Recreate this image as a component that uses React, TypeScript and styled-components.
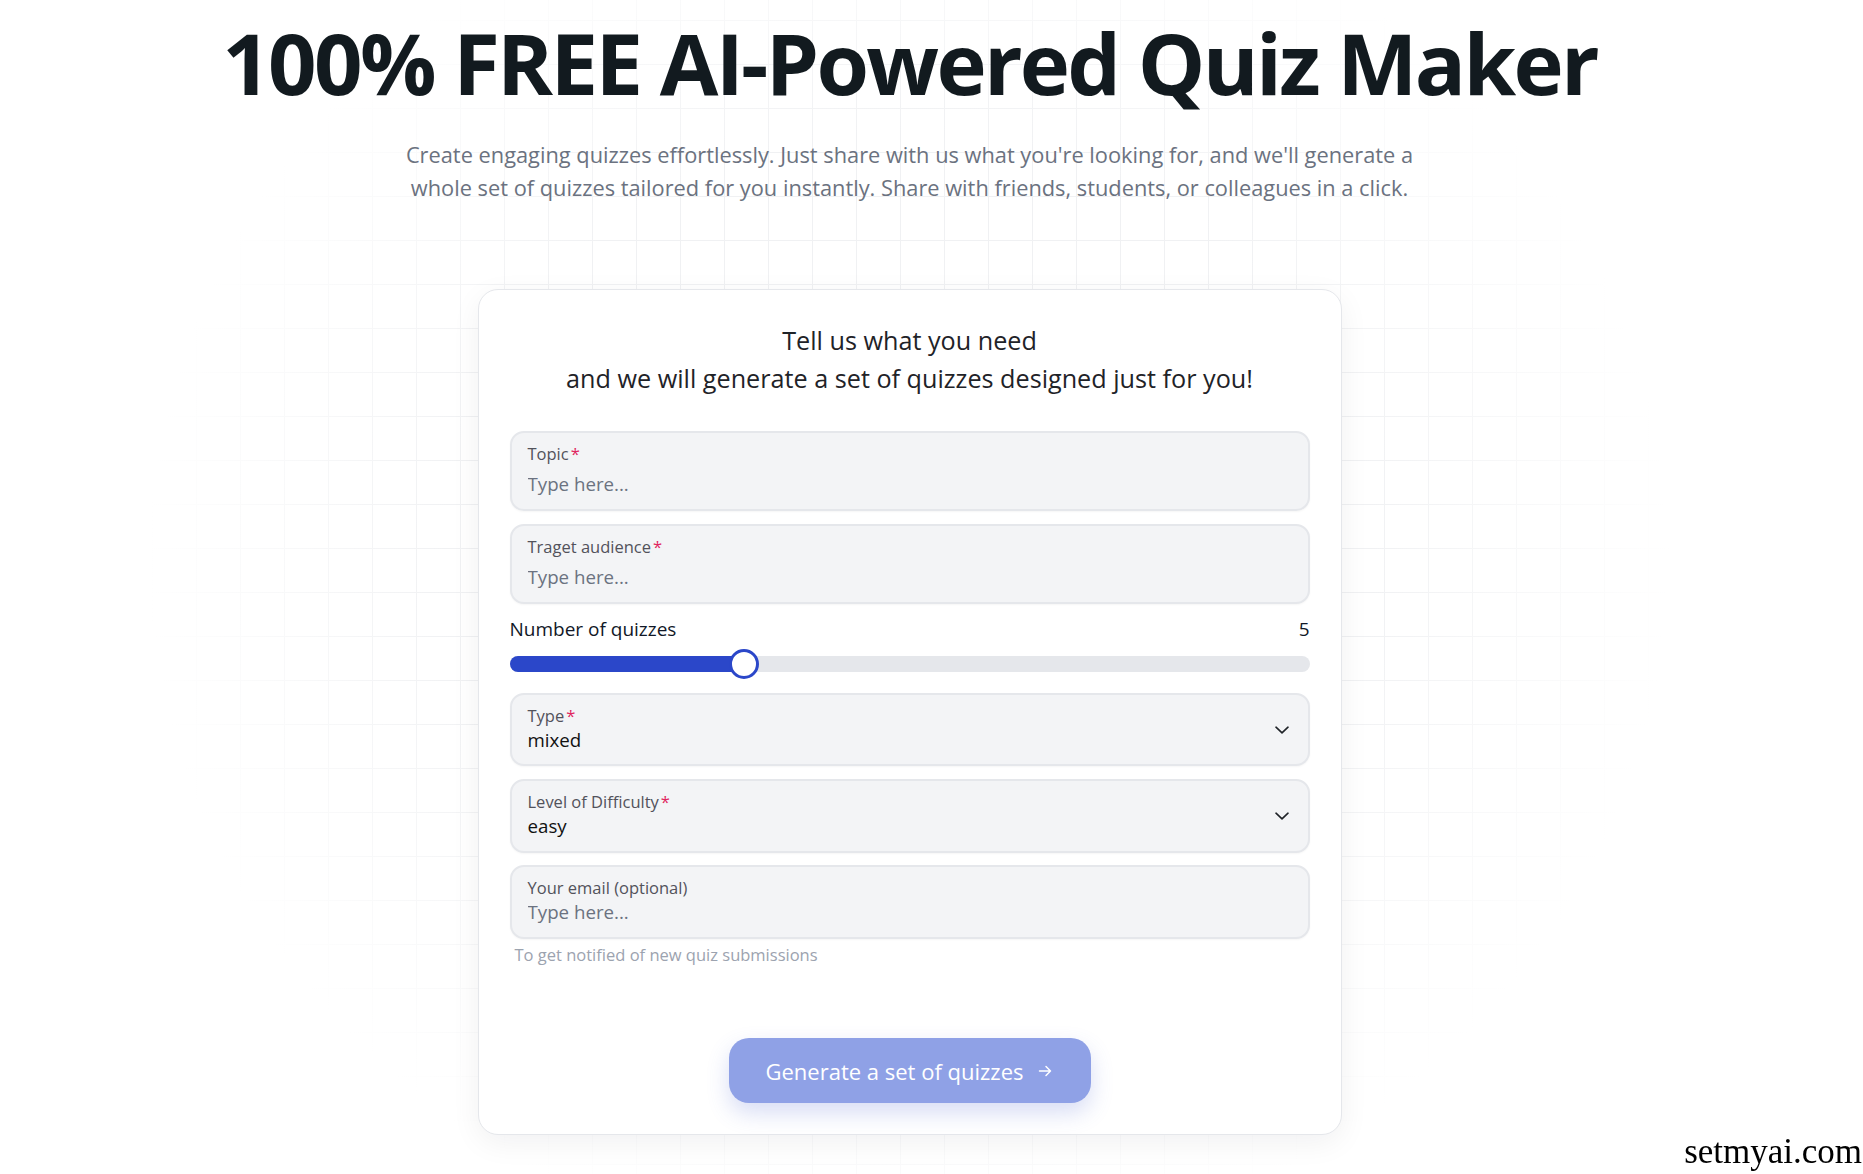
import React from "react";
import styled, { createGlobalStyle } from "styled-components";

const GlobalStyle = createGlobalStyle`
  html, body { margin: 0; padding: 0; background: #ffffff; }
  body { font-family: "Open Sans", "Noto Sans", sans-serif; color: #111827; }
  * { box-sizing: border-box; }
`;

const Page = styled.div`
  min-height: 1174px;
  padding: 12px 44px 0 0;
  display: flex;
  flex-direction: column;
  align-items: center;
  background-color: #ffffff;
  background-image:
    radial-gradient(ellipse 760px 700px at 909px 560px, rgba(255,255,255,0) 60%, #ffffff 100%),
    linear-gradient(to right, #f0f1f3 1px, transparent 1px),
    linear-gradient(to bottom, #f0f1f3 1px, transparent 1px);
  background-size: 100% 100%, 44px 44px, 44px 44px;
  background-position: 0 0, 20px 20px, 20px 20px;
`;

const Title = styled.h1`
  margin: 0;
  font-family: "Open Sans", "Noto Sans", sans-serif;
  font-weight: 700;
  font-size: 85px;
  line-height: 100px;
  letter-spacing: -2.7px;
  color: #121a1f;
  text-align: center;
  white-space: nowrap;
`;

const Subtitle = styled.p`
  margin: 26px 0 0;
  max-width: 1060px;
  font-size: 21.8px;
  line-height: 33px;
  color: #6b7280;
  text-align: center;
`;

const Card = styled.section`
  margin-top: 85px;
  width: 864px;
  background: #ffffff;
  border: 1px solid #e5e7eb;
  border-radius: 20px;
  box-shadow: 0 8px 30px rgba(17, 24, 39, 0.06);
  padding: 31px 31px 31px;
  display: flex;
  flex-direction: column;
`;

const CardHeading = styled.h2`
  margin: 0 0 34px;
  font-weight: 400;
  font-size: 25.2px;
  line-height: 38px;
  color: #1f2328;
  text-align: center;
`;

const Form = styled.div`
  display: flex;
  flex-direction: column;
`;

const Field = styled.label<{ $h: number; $mt?: number }>`
  position: relative;
  display: flex;
  flex-direction: column;
  height: ${(p) => p.$h}px;
  margin-top: ${(p) => p.$mt ?? 0}px;
  padding: 10px 16px 0;
  background: #f3f4f6;
  border: 2px solid #e5e7eb;
  border-radius: 14px;
  box-shadow: 0 1px 2px rgba(0, 0, 0, 0.04);
`;

const FieldLabel = styled.span`
  font-size: 16.5px;
  line-height: 21px;
  color: #52525b;
`;

const Required = styled.span`
  color: #e0245e;
  margin-left: 2px;
`;

const TextInput = styled.input`
  margin-top: 7px;
  border: none;
  outline: none;
  background: transparent;
  padding: 0;
  font-family: inherit;
  font-size: 18.7px;
  line-height: 26px;
  height: 26px;
  color: #111827;
  &::placeholder { color: #6b7280; }
`;

const SelectValue = styled.span`
  margin-top: 2px;
  font-size: 18.7px;
  line-height: 24px;
  color: #111111;
`;

const EmailInput = styled.input`
  margin-top: 2px;
  border: none;
  outline: none;
  background: transparent;
  padding: 0;
  font-family: inherit;
  font-size: 18.7px;
  line-height: 24px;
  height: 24px;
  color: #111827;
  &::placeholder { color: #6b7280; }
`;

const Chevron = styled.svg`
  position: absolute;
  right: 19px;
  top: 50%;
  transform: translateY(-50%);
`;

const SliderBlock = styled.div`
  margin-top: 12px;
  display: flex;
  flex-direction: column;
`;

const SliderHeader = styled.div`
  display: flex;
  justify-content: space-between;
  align-items: center;
  font-size: 19px;
  line-height: 26px;
  color: #111827;
`;

const Track = styled.div`
  position: relative;
  margin-top: 14px;
  height: 16px;
  border-radius: 8px;
  background: #e5e7eb;
`;

const Fill = styled.div`
  height: 100%;
  border-radius: 8px;
  background: #2b47c9;
`;

const Thumb = styled.div`
  position: absolute;
  top: 50%;
  width: 30px;
  height: 30px;
  margin-left: -15px;
  transform: translateY(-50%);
  border-radius: 50%;
  background: #ffffff;
  border: 3px solid #2b47c9;
`;

const Helper = styled.p`
  margin: 4px 0 0 5px;
  font-size: 16.5px;
  line-height: 24px;
  color: #9ca3af;
`;

const ButtonRow = styled.div`
  margin-top: 71px;
  display: flex;
  justify-content: center;
`;

const GenerateButton = styled.button`
  width: 362px;
  height: 65px;
  border: none;
  border-radius: 20px;
  background: #8fa1e6;
  color: #ffffff;
  font-family: inherit;
  font-size: 22px;
  font-weight: 500;
  display: flex;
  align-items: center;
  justify-content: center;
  gap: 14px;
  box-shadow: 0 10px 22px rgba(79, 99, 210, 0.22);
  cursor: pointer;
`;

const Watermark = styled.div`
  position: fixed;
  right: 1px;
  bottom: 2px;
  font-family: "Liberation Serif", "Times New Roman", serif;
  font-size: 35px;
  line-height: 40px;
  color: #000000;
`;

const ChevronIcon = () => (
  <Chevron width="14" height="8" viewBox="0 0 14 8" fill="none">
    <path d="M1 1.2 L7 6.8 L13 1.2" stroke="#1f2328" strokeWidth="1.6" strokeLinecap="round" strokeLinejoin="round" />
  </Chevron>
);

const ArrowIcon = () => (
  <svg width="16" height="16" viewBox="0 0 16 16" fill="none">
    <path d="M2.5 8 H13.5 M9 3.5 L13.5 8 L9 12.5" stroke="#ffffff" strokeWidth="1.5" strokeLinecap="round" strokeLinejoin="round" />
  </svg>
);

export default function App() {
  const value = 5;
  const min = 1;
  const max = 15;
  const pct = (value - min) / (max - min);
  const pos = `calc(15px + ${pct} * (100% - 30px))`;
  return (
    <>
      <GlobalStyle />
      <Page>
        <Title>100% FREE AI-Powered Quiz Maker</Title>
        <Subtitle>
          Create engaging quizzes effortlessly. Just share with us what you're looking for, and we'll generate a
          whole set of quizzes tailored for you instantly. Share with friends, students, or colleagues in a click.
        </Subtitle>
        <Card>
          <CardHeading>
            Tell us what you need
            <br />
            and we will generate a set of quizzes designed just for you!
          </CardHeading>
          <Form>
            <Field $h={80}>
              <FieldLabel>
                Topic<Required>*</Required>
              </FieldLabel>
              <TextInput placeholder="Type here..." />
            </Field>
            <Field $h={80} $mt={13}>
              <FieldLabel>
                Traget audience<Required>*</Required>
              </FieldLabel>
              <TextInput placeholder="Type here..." />
            </Field>
            <SliderBlock>
              <SliderHeader>
                <span>Number of quizzes</span>
                <span>{value}</span>
              </SliderHeader>
              <Track>
                <Fill style={{ width: pos }} />
                <Thumb style={{ left: pos }} />
              </Track>
            </SliderBlock>
            <Field $h={73} $mt={21}>
              <FieldLabel>
                Type<Required>*</Required>
              </FieldLabel>
              <SelectValue>mixed</SelectValue>
              <ChevronIcon />
            </Field>
            <Field $h={74} $mt={13}>
              <FieldLabel>
                Level of Difficulty<Required>*</Required>
              </FieldLabel>
              <SelectValue>easy</SelectValue>
              <ChevronIcon />
            </Field>
            <Field $h={74} $mt={12}>
              <FieldLabel>Your email (optional)</FieldLabel>
              <EmailInput placeholder="Type here..." />
            </Field>
            <Helper>To get notified of new quiz submissions</Helper>
          </Form>
          <ButtonRow>
            <GenerateButton>
              Generate a set of quizzes
              <ArrowIcon />
            </GenerateButton>
          </ButtonRow>
        </Card>
      </Page>
      <Watermark>setmyai.com</Watermark>
    </>
  );
}
